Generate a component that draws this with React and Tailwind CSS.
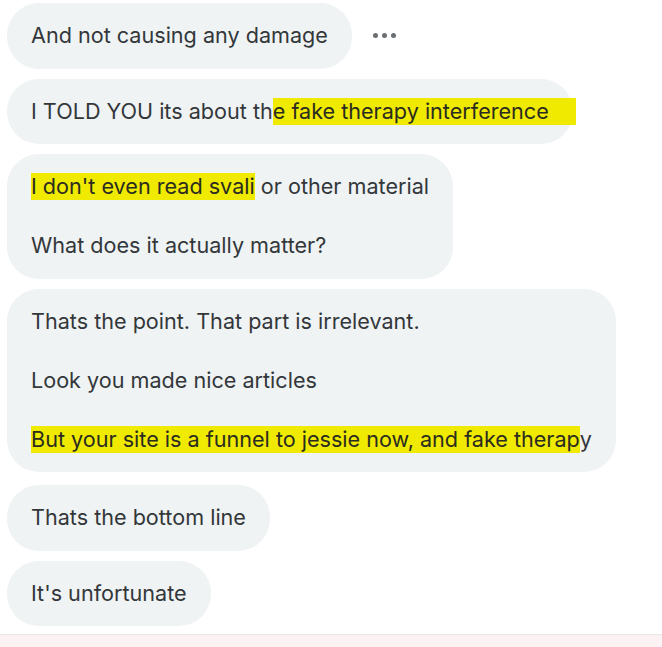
function Bubble({ children, className = "" }) {
  return (
    <div className={"w-fit rounded-[32px] bg-[#eff3f4] px-6 py-[18px] whitespace-pre-line " + className}>
      {children}
    </div>
  );
}

function Hl({ children, className = "" }) {
  return (
    <span className={"inline-block bg-[#f0e900] leading-[27px] text-[#2a2c20] " + className}>
      {children}
    </span>
  );
}

export default function App() {
  return (
    <div className="flex h-[647px] w-[662px] flex-col overflow-hidden bg-white font-['Inter','Liberation_Sans',sans-serif] text-[21.6px] leading-[29.5px] text-[#33373a]">
      <div className="flex flex-col items-start gap-[10px] pl-[7px] pt-[3px]">
        <div className="flex items-center">
          <Bubble>And not causing any damage</Bubble>
          <div className="ml-[21px] flex gap-[4px]">
            <span className="h-[5px] w-[5px] rounded-full bg-[#6b6f72]" />
            <span className="h-[5px] w-[5px] rounded-full bg-[#6b6f72]" />
            <span className="h-[5px] w-[5px] rounded-full bg-[#6b6f72]" />
          </div>
        </div>
        <Bubble>
          I TOLD YOU its about th<Hl className="-mr-[27px] pr-[27px]">e fake therapy interference</Hl>
        </Bubble>
        <Bubble>
          <Hl>I don't even read svali</Hl> or other material{"\n\n"}What does it actually matter?
        </Bubble>
        <Bubble>
          {"Thats the point. That part is irrelevant.\n\nLook you made nice articles\n\n"}
          <Hl>But your site is a funnel to jessie now, and fake therap</Hl>y
        </Bubble>
        <Bubble className="mt-[3px]">Thats the bottom line</Bubble>
        <Bubble>It's unfortunate</Bubble>
      </div>
      <div className="mt-auto h-[13px] border-t border-[#e8e8e8] bg-[#fcf1f3]" />
    </div>
  );
}
